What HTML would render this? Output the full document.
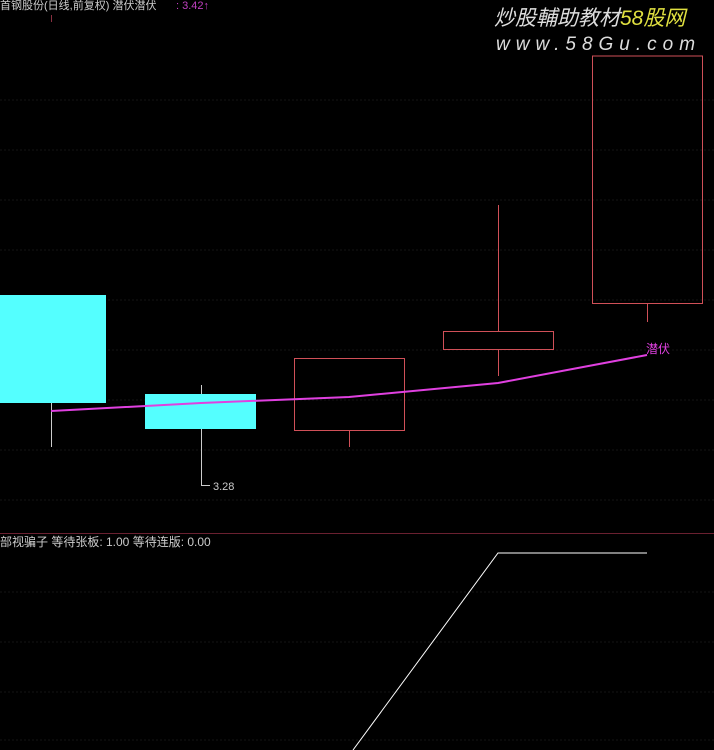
<!DOCTYPE html><html><head><meta charset="utf-8"><style>
body{margin:0;background:#000;width:714px;height:750px;overflow:hidden;font-family:"Liberation Sans","Noto Sans CJK SC",sans-serif}
</style></head><body>
<svg width="714" height="750" xmlns="http://www.w3.org/2000/svg" style="position:absolute;left:0;top:0">
<g stroke="#141414" stroke-width="1" stroke-dasharray="2,2">
<line x1="0" y1="100" x2="714" y2="100"/><line x1="0" y1="150" x2="714" y2="150"/><line x1="0" y1="200" x2="714" y2="200"/><line x1="0" y1="250" x2="714" y2="250"/><line x1="0" y1="300" x2="714" y2="300"/><line x1="0" y1="350" x2="714" y2="350"/><line x1="0" y1="400" x2="714" y2="400"/><line x1="0" y1="450" x2="714" y2="450"/><line x1="0" y1="500" x2="714" y2="500"/>
<line x1="0" y1="592" x2="714" y2="592"/><line x1="0" y1="642" x2="714" y2="642"/><line x1="0" y1="692" x2="714" y2="692"/><line x1="0" y1="740" x2="714" y2="740"/>
</g>
<line x1="0" y1="533.5" x2="714" y2="533.5" stroke="#6a2030" stroke-width="1"/>
<line x1="51.5" y1="15" x2="51.5" y2="22" stroke="#883040"/>
<rect x="0" y="295" width="106" height="108" fill="#54ffff"/>
<line x1="51.5" y1="403" x2="51.5" y2="447" stroke="#ccc"/>
<rect x="145" y="394" width="111" height="35" fill="#54ffff"/>
<line x1="201.5" y1="385" x2="201.5" y2="394" stroke="#ccc"/>
<line x1="201.5" y1="429" x2="201.5" y2="485" stroke="#ccc"/>
<line x1="201" y1="485.5" x2="210" y2="485.5" stroke="#ccc"/>
<text x="213" y="490" fill="#ccc" font-size="11">3.28</text>
<g stroke="#d05058" fill="none" stroke-width="1">
<rect x="294.5" y="358.5" width="110" height="72"/>
<line x1="349.5" y1="430" x2="349.5" y2="447"/>
<rect x="443.5" y="331.5" width="110" height="18"/>
<line x1="498.5" y1="205" x2="498.5" y2="331"/>
<line x1="498.5" y1="350" x2="498.5" y2="376"/>
<rect x="592.5" y="56" width="110" height="247.5"/>
<line x1="647.5" y1="304" x2="647.5" y2="322"/>
</g>
<polyline points="51,411 201,403 349,397 498,383 647,355" stroke="#e040e0" stroke-width="2" fill="none"/>
<text x="646" y="353" fill="#e040e0" font-size="12">潜伏</text>
<polyline points="353,750 498,553 647,553" stroke="#fff" stroke-width="1" fill="none"/>
<text x="0" y="9" fill="#ccc" font-size="11">首钢股份(日线,前复权) 潜伏潜伏</text>
<text x="176" y="9" fill="#c040c0" font-size="11">: 3.42↑</text>
<text x="0" y="546" fill="#ccc" font-size="12">部视骗子  等待张板: 1.00  等待连版: 0.00</text>
<text x="494" y="25" fill="#ddd" font-size="21" font-style="italic">炒股輔助教材<tspan fill="#e0e040">58股网</tspan></text>
<text x="496" y="50" fill="#ddd" font-size="19" font-style="italic" letter-spacing="6">www.58Gu.com</text>
</svg>
</body></html>
